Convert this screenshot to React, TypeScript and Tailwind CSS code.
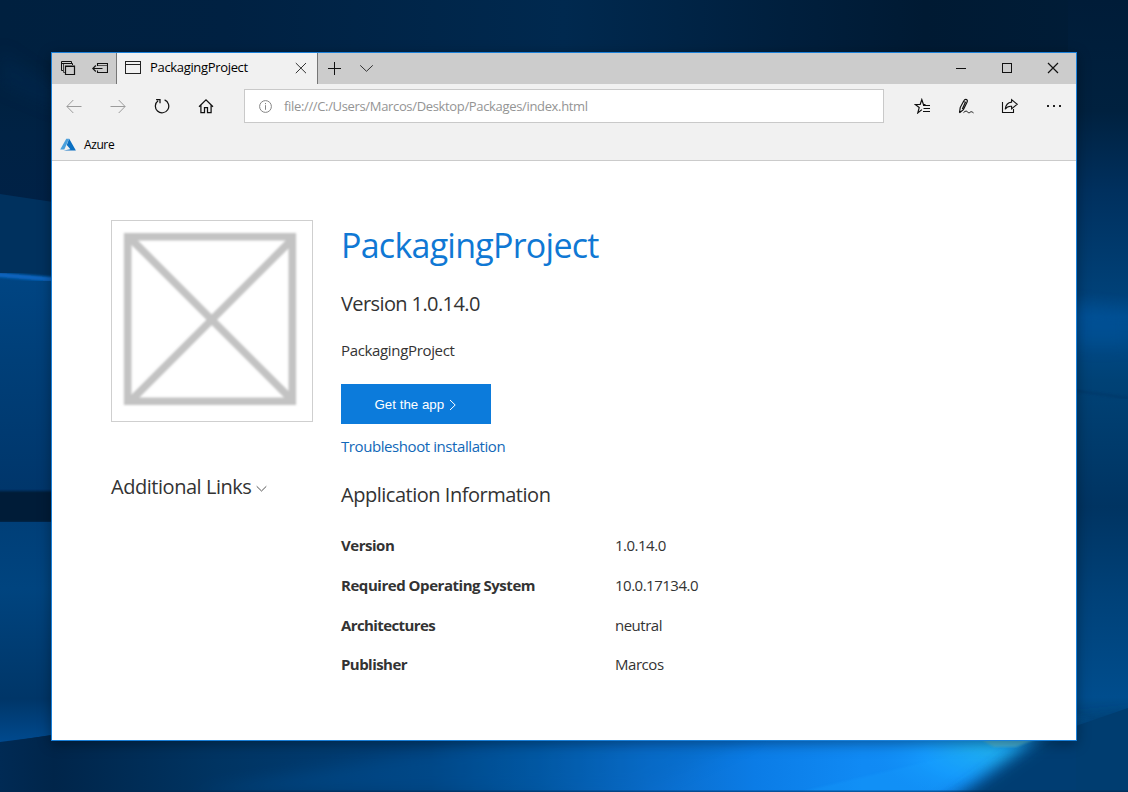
import React from "react";

function Wallpaper() {
  return (
    <svg className="absolute inset-0" width="1128" height="792" viewBox="0 0 1128 792">
      <defs>
        <linearGradient id="top" x1="0" x2="1" y1="0" y2="0">
          <stop offset="0" stopColor="#00203f" />
          <stop offset="0.2" stopColor="#002142" />
          <stop offset="0.5" stopColor="#00294f" />
          <stop offset="0.7" stopColor="#001f3d" />
          <stop offset="0.82" stopColor="#001a33" />
          <stop offset="1" stopColor="#001d38" />
        </linearGradient>
        <linearGradient id="left" x1="0" x2="0" y1="0" y2="1">
          <stop offset="0" stopColor="#00203d" />
          <stop offset="0.1" stopColor="#002244" />
          <stop offset="0.2" stopColor="#002146" />
          <stop offset="0.245" stopColor="#00264c" />
          <stop offset="0.25" stopColor="#00305f" />
          <stop offset="0.345" stopColor="#003261" />
        </linearGradient>
        <linearGradient id="pane1" x1="0" x2="0" y1="0" y2="1">
          <stop offset="0" stopColor="#004583" />
          <stop offset="0.4" stopColor="#003f78" />
          <stop offset="1" stopColor="#00366b" />
        </linearGradient>
        <linearGradient id="pane2" x1="0" x2="0" y1="0" y2="1">
          <stop offset="0" stopColor="#003f78" />
          <stop offset="0.3" stopColor="#00447f" />
          <stop offset="0.8" stopColor="#003668" />
          <stop offset="1" stopColor="#004a8f" />
        </linearGradient>
        <linearGradient id="right" x1="0" x2="0" y1="0" y2="1">
          <stop offset="0" stopColor="#001c38" />
          <stop offset="0.14" stopColor="#00213f" />
          <stop offset="0.24" stopColor="#00305e" />
          <stop offset="0.37" stopColor="#004178" />
          <stop offset="0.4" stopColor="#004d8e" />
          <stop offset="0.48" stopColor="#004276" />
          <stop offset="0.64" stopColor="#003462" />
          <stop offset="0.75" stopColor="#004178" />
          <stop offset="0.88" stopColor="#004d8d" />
          <stop offset="0.93" stopColor="#00406f" />
          <stop offset="1" stopColor="#003664" />
        </linearGradient>
        <linearGradient id="bottom" x1="0" x2="1" y1="0" y2="0">
          <stop offset="0" stopColor="#002a54" />
          <stop offset="0.05" stopColor="#00254a" />
          <stop offset="0.2" stopColor="#003462" />
          <stop offset="0.4" stopColor="#00407a" />
          <stop offset="0.5" stopColor="#02549d" />
          <stop offset="0.6" stopColor="#0a6bc9" />
          <stop offset="0.7" stopColor="#0b7ce6" />
          <stop offset="0.8" stopColor="#108af4" />
          <stop offset="0.85" stopColor="#108af4" />
          <stop offset="1" stopColor="#0d82e6" />
        </linearGradient>
        <radialGradient id="glow">
          <stop offset="0" stopColor="#22b4ee" />
          <stop offset="0.5" stopColor="#169eff" stopOpacity="0.8" />
          <stop offset="1" stopColor="#108af4" stopOpacity="0" />
        </radialGradient>
        <filter id="soft1"><feGaussianBlur stdDeviation="1.2" /></filter>
        <filter id="soft8" x="-50%" y="-50%" width="200%" height="200%"><feGaussianBlur stdDeviation="8" /></filter>
      </defs>
      <rect width="1128" height="792" fill="url(#top)" />
      <rect y="60" width="60" height="732" fill="url(#left)" />
      <path d="M0 50 L60 90 L60 110 L0 85Z" fill="#002c56" opacity="0.35" filter="url(#soft8)" />
      <path d="M0 194 L60 203 V280 H0Z" fill="#00315e" />
      <path d="M0 274 L60 279 V492 H0Z" fill="url(#pane1)" />
      <path d="M-5 274.5 L60 280" stroke="#0764bd" strokeWidth="5" filter="url(#soft1)" />
      <rect x="-5" y="491" width="65" height="31" fill="#001b39" filter="url(#soft1)" />
      <path d="M0 522 H60 V740 L0 743Z" fill="url(#pane2)" />
      <path d="M0 742 L70 733 V792 H0Z" fill="#002a54" />
      <rect x="1068" y="0" width="60" height="792" fill="url(#right)" />
      <path d="M1070 304 L1130 313 V345 H1070Z" fill="#00539b" opacity="0.5" filter="url(#soft8)" />
      <path d="M1070 390 L1128 398" stroke="#003563" strokeWidth="2" opacity="0.6" filter="url(#soft1)" />
      <path d="M0 743 L51 735 H1078 V792 H0Z" fill="url(#bottom)" />
      <path d="M190 792 L520 735 H760 L640 792Z" fill="#0065ba" opacity="0.22" filter="url(#soft8)" />
      <ellipse cx="990" cy="752" rx="130" ry="55" fill="url(#glow)" />
      <path d="M1040 735 L800 792 H940Z" fill="#17a2ff" opacity="0.25" filter="url(#soft1)" />
      <path d="M1056 725 L935 812 H1180 V712Z" fill="#003d72" filter="url(#soft8)" />
      <path d="M1076 726 L1128 708 V792 H1076Z" fill="#003d70" />
      <path d="M980 739 H1036 L1016 747 H994Z" fill="#54b8cf" opacity="0.7" filter="url(#soft1)" />
      <rect y="790.5" width="1128" height="1.5" fill="#00254d" opacity="0.5" />
    </svg>
  );
}

type IconProps = { children: React.ReactNode; w?: number; h?: number; stroke?: string; fill?: string; crisp?: boolean };

function Icon({ children, w = 16, h = 16, stroke = "#111", fill = "none", crisp = false }: IconProps) {
  return (
    <svg
      width={w}
      height={h}
      viewBox={`0 0 ${w} ${h}`}
      fill={fill}
      stroke={stroke}
      strokeWidth="1"
      shapeRendering={crisp ? "crispEdges" : undefined}
      className="shrink-0"
    >
      {children}
    </svg>
  );
}

function TitleBar() {
  return (
    <div className="flex h-[31px] bg-[#cccccc]">
      <button className="flex w-8 items-center justify-center pb-px">
        <Icon>
          <path d="M3.5 10.5H1.5V1.5H11.5V3.5M1.5 3.5H12.5V5" />
          <path d="M5 12.5H3.5V4" stroke="#444" />
          <path d="M5.5 6H14.5V14.5H5.5Z" strokeWidth="1.2" />
          <path d="M5 6.5H15" />
        </Icon>
      </button>
      <button className="flex w-8 items-center justify-center pb-px">
        <Icon>
          <path d="M5.5 6V3.5H15.5V12.5H5.5V10.5M0.8 8.5H10.5M3.8 5.5L0.8 8.5L3.8 11.5" strokeWidth="1.1" />
          <path d="M6 5.5H15" stroke="#555" />
        </Icon>
      </button>
      <div className="flex w-[202px] items-center border-x border-[#767676] bg-[#f1f1f1] pb-px pl-2">
        <Icon w={17} crisp stroke="#222">
          <path d="M0.5 1.5H15.5V13.5H0.5ZM0.5 4.5H15.5" />
        </Icon>
        <span className="mb-[3px] ml-2 flex-1 text-[13px] leading-5 tracking-[-0.33px] text-black">PackagingProject</span>
        <button className="flex w-8 items-center justify-center">
          <Icon stroke="#333"><path d="M2.8 3L13 13.2M13 3L2.8 13.2" /></Icon>
        </button>
      </div>
      <button className="flex w-8 items-center justify-center pb-px">
        <Icon crisp><path d="M2 8.5H15M8.5 2V15" /></Icon>
      </button>
      <button className="flex w-8 items-center justify-center pb-px">
        <Icon stroke="#333"><path d="M2.2 5.3L8.5 11.3L14.8 5.3" /></Icon>
      </button>
      <div className="flex-1" />
      <button className="flex w-[46px] items-center justify-center pb-px">
        <Icon crisp><path d="M3 8.5H13" /></Icon>
      </button>
      <button className="flex w-[46px] items-center justify-center pb-px">
        <Icon crisp><path d="M3.5 3.5H12.5V12.5H3.5Z" /></Icon>
      </button>
      <button className="flex w-[46px] items-center justify-center pb-px">
        <Icon><path d="M3 3L13 13M13 3L3 13" strokeWidth="1.2" /></Icon>
      </button>
    </div>
  );
}

function ToolButton({ children }: { children: React.ReactNode }) {
  return <button className="flex h-11 w-11 shrink-0 items-center justify-center">{children}</button>;
}

function ToolBar() {
  return (
    <div className="flex h-11 items-center">
      <ToolButton>
        <Icon stroke="#9b9b9b"><path d="M1 8.5H15.5M7.3 2L0.9 8.5L7.3 15" /></Icon>
      </ToolButton>
      <ToolButton>
        <Icon stroke="#9b9b9b"><path d="M0.5 8.5H15M8.7 2L15.1 8.5L8.7 15" /></Icon>
      </ToolButton>
      <ToolButton>
        <Icon>
          <path d="M10.6 1.9A6.7 6.7 0 1 1 4.1 2.7M2.1 1.5H6V5.3" strokeWidth="1.25" />
        </Icon>
      </ToolButton>
      <ToolButton>
        <Icon>
          <path d="M1 8.7L8 1.9L15 8.7M2.9 7.3V14.5H6.5V9.5H9.5V14.5H13.1V7.3" strokeWidth="1.25" />
        </Icon>
      </ToolButton>
      <div className="ml-4 flex h-[34px] w-[640px] items-center border border-[#c9c9c9] bg-white pl-3">
        <Icon stroke="#858585">
          <circle cx="8.5" cy="8.5" r="5.9" />
          <path d="M8.5 7.2V11.8M8.5 5V6.2" />
        </Icon>
        <span className="ml-[11px] text-[13px] leading-5 tracking-[-0.34px] text-[#949494]">
          file:///C:/Users/Marcos/Desktop/Packages/index.html
        </span>
      </div>
      <div className="flex-1" />
      <ToolButton>
        <Icon>
          <path d="M11.5 6.5H9.4L7.8 1.6L6.2 6.5H1.3L5.2 9.6L3.8 14.9L7.9 11.6" strokeWidth="1.2" />
          <path d="M9 7.5H16M9.5 10.5H16M9 13.5H16" />
        </Icon>
      </ToolButton>
      <ToolButton>
        <Icon>
          <path d="M1.5 14.8L2.2 9.6L5.6 3.2Q6.8 0.9 8.6 1.6Q10 2.4 8.9 4.6L5.4 11.6L1.5 14.8M5.6 3.2L7.4 4.2L4.3 11" strokeWidth="1.15" />
          <path d="M5.5 14.6C7.4 12.8 8.6 12.7 9.6 14C10.6 15.2 11.6 14.8 12.3 14.1C13.2 13.3 14 13.8 15.5 14.9" />
        </Icon>
      </ToolButton>
      <ToolButton>
        <Icon w={18}>
          <path d="M1.5 4V14.5H12.5V11" strokeWidth="1.1" />
          <path d="M10.6 1.6L16.2 6.2L10.6 10.8V8.3C7.6 8.1 5.6 9 4.2 11.3C4.6 7.3 6.7 4.5 10.6 4.1Z" strokeWidth="1.1" />
        </Icon>
      </ToolButton>
      <ToolButton>
        <Icon stroke="none" fill="#222" crisp>
          <path d="M1 7H3V9H1ZM7 7H9V9H7ZM13 7H15V9H13Z" />
        </Icon>
      </ToolButton>
    </div>
  );
}

function FavoritesBar() {
  return (
    <div className="flex h-[33px] items-center border-b border-[#cbcbcb] pl-2 pt-0.5">
      <Icon stroke="none">
        <path d="M6.3 1.7H9.2L4.3 12.5H0.2Z" fill="#4ba0dc" />
        <path d="M9.2 1.7L15.9 13.5H3.6L10.4 12.3L6.8 8.1Z" fill="#0a6fc2" />
      </Icon>
      <span className="ml-2 text-[12px] leading-5 tracking-[-0.4px] text-black">Azure</span>
    </div>
  );
}

function PlaceholderLogo() {
  return (
    <div className="h-[202px] w-[202px] border border-[#cfcfcf]">
      <svg width="200" height="200" viewBox="0 0 200 200">
        <filter id="soften"><feGaussianBlur stdDeviation="1.1" /></filter>
        <g fill="none" stroke="#c3c3c3" filter="url(#soften)">
          <path d="M15.7 15.7H180.3V180.3H15.7Z" strokeWidth="7.6" />
          <path d="M18 17L180.5 179.5M180.5 18L18 180.5" strokeWidth="7.6" />
        </g>
      </svg>
    </div>
  );
}

const info = [
  { label: "Version", value: "1.0.14.0", box: "h-10", track: "tracking-[-0.47px]", valueTrack: "tracking-[-0.5px]" },
  { label: "Required Operating System", value: "10.0.17134.0", box: "h-10", track: "tracking-[-0.46px]", valueTrack: "tracking-[-0.5px]" },
  { label: "Architectures", value: "neutral", box: "h-[39px]", track: "tracking-[-0.6px]", valueTrack: "tracking-[-0.5px]" },
  { label: "Publisher", value: "Marcos", box: "h-10", track: "tracking-[-0.55px]", valueTrack: "tracking-[-0.45px]" },
];

function Page() {
  return (
    <main className="flex flex-1 bg-white pl-[59px] pt-[59px] text-[15px] leading-5 text-[#333]">
      <div className="w-[230px] shrink-0">
        <PlaceholderLogo />
        <div className="mt-[51px] flex items-center text-[20px] leading-7">
          <span className="tracking-[-0.46px]">Additional Links</span>
          <svg className="ml-[5px] mt-1" width="11" height="8" viewBox="0 0 11 8" fill="none" stroke="#555">
            <path d="M0.7 1.3L5.5 6L10.3 1.3" />
          </svg>
        </div>
      </div>
      <div className="flex flex-col items-start">
        <h1 className="mt-[5px] text-[34px] leading-10 tracking-[-0.75px] text-[#0f78d4]">PackagingProject</h1>
        <h2 className="mt-[25px] text-[20px] leading-7 tracking-[-0.6px]">Version 1.0.14.0</h2>
        <p className="mt-[22px] tracking-[-0.34px]">PackagingProject</p>
        <button className="mt-6 flex h-10 w-[150px] items-center bg-[#0c7bdb] pl-[33.5px] pt-0.5 font-['Liberation_Sans',Arial,sans-serif] text-[13.33px] text-white">
          Get the app
          <svg className="mb-px ml-[5px]" width="8" height="12" viewBox="0 0 8 12" fill="none" stroke="white">
            <path d="M1 1L6.2 6L1 11" />
          </svg>
        </button>
        <a className="mt-3 tracking-[-0.42px] text-[#1268b8]">Troubleshoot installation</a>
        <h2 className="mt-[25px] text-[20px] leading-7 tracking-[-0.48px]">Application Information</h2>
        <dl className="mt-[26px]">
          {info.map((row) => (
            <div key={row.label} className={`flex whitespace-nowrap ${row.box}`}>
              <dt className={`w-[274px] font-bold ${row.track}`}>{row.label}</dt>
              <dd className={row.valueTrack}>{row.value}</dd>
            </div>
          ))}
        </dl>
      </div>
    </main>
  );
}

export default function App() {
  return (
    <div className="relative h-[792px] w-[1128px] overflow-hidden pl-[51px] pt-[52px] font-['Open_Sans','Noto_Sans',sans-serif]">
      <Wallpaper />
      <div className="relative flex h-[689px] w-[1026px] flex-col border border-[#1a80d9] bg-[#f1f1f1] shadow-[0_3px_12px_rgba(0,0,0,0.35)]">
        <TitleBar />
        <ToolBar />
        <FavoritesBar />
        <Page />
      </div>
    </div>
  );
}
